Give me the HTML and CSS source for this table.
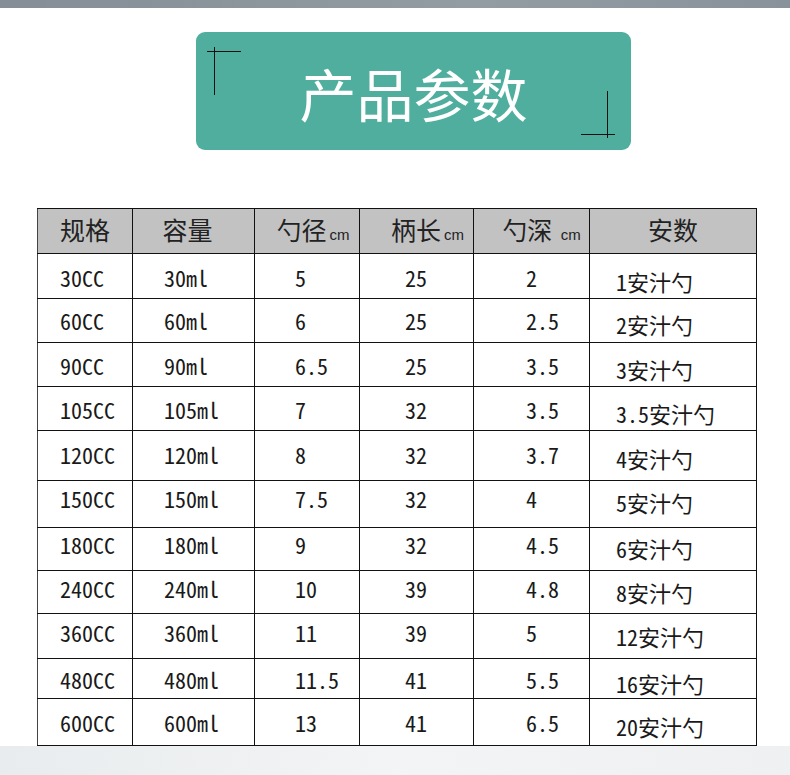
FILE: index.html
```html
<!DOCTYPE html>
<html lang="zh">
<head>
<meta charset="utf-8">
<title>产品参数</title>
<link rel="stylesheet" href="styles.css">
</head>
<body>
<div class="topbar"></div>
<section class="title-wrap">
  <div class="title-box">
    <span class="mark mark-tl-h"></span>
    <span class="mark mark-tl-v"></span>
    <span class="mark mark-br-v"></span>
    <span class="mark mark-br-h"></span>
    <h1 class="title">产品参数</h1>
  </div>
</section>
<table class="spec">
  <thead>
    <tr>
      <th>规格</th>
      <th>容量</th>
      <th>勺径<span class="unit">cm</span></th>
      <th>柄长<span class="unit">cm</span></th>
      <th>勺深 <span class="unit">cm</span></th>
      <th>安数</th>
    </tr>
  </thead>
  <tbody>
    <tr><td>30CC</td><td>30ml</td><td>5</td><td>25</td><td>2</td><td>1安汁勺</td></tr>
    <tr><td>60CC</td><td>60ml</td><td>6</td><td>25</td><td>2.5</td><td>2安汁勺</td></tr>
    <tr><td>90CC</td><td>90ml</td><td>6.5</td><td>25</td><td>3.5</td><td>3安汁勺</td></tr>
    <tr><td>105CC</td><td>105ml</td><td>7</td><td>32</td><td>3.5</td><td>3.5安汁勺</td></tr>
    <tr><td>120CC</td><td>120ml</td><td>8</td><td>32</td><td>3.7</td><td>4安汁勺</td></tr>
    <tr><td>150CC</td><td>150ml</td><td>7.5</td><td>32</td><td>4</td><td>5安汁勺</td></tr>
    <tr><td>180CC</td><td>180ml</td><td>9</td><td>32</td><td>4.5</td><td>6安汁勺</td></tr>
    <tr><td>240CC</td><td>240ml</td><td>10</td><td>39</td><td>4.8</td><td>8安汁勺</td></tr>
    <tr><td>360CC</td><td>360ml</td><td>11</td><td>39</td><td>5</td><td>12安汁勺</td></tr>
    <tr><td>480CC</td><td>480ml</td><td>11.5</td><td>41</td><td>5.5</td><td>16安汁勺</td></tr>
    <tr><td>600CC</td><td>600ml</td><td>13</td><td>41</td><td>6.5</td><td>20安汁勺</td></tr>
  </tbody>
</table>
<div class="footer"></div>
</body>
</html>
```
FILE: styles.css
```css
* { box-sizing: border-box; }
html, body { margin: 0; padding: 0; background: #ffffff; }
body {
  width: 790px;
  height: 775px;
  overflow: hidden;
  font-family: "Noto Sans CJK SC", sans-serif;
}
.topbar {
  height: 8px;
  background: linear-gradient(90deg, #838e96 0%, #8c979e 40%, #919ca3 60%, #87929a 100%);
}
.title-wrap {
  padding-top: 24px;
  padding-left: 196px;
}
.title-box {
  position: relative;
  width: 435px;
  height: 118px;
  background: #4fae9e;
  border-radius: 9px;
  display: flex;
  align-items: center;
  justify-content: center;
}
.title {
  margin: 0;
  color: #ffffff;
  font-family: "Noto Sans CJK SC", sans-serif;
  font-weight: 400;
  font-size: 57px;
  line-height: 1;
  letter-spacing: 0;
  transform: translateY(1px);
}
.mark { position: absolute; background: #111; }
.mark-tl-h { left: 11px; top: 19px; width: 34px; height: 1px; }
.mark-tl-v { left: 18px; top: 15px; width: 1px; height: 48px; }
.mark-br-v { left: 411px; top: 59px; width: 1px; height: 47px; }
.mark-br-h { left: 385px; top: 102px; width: 34px; height: 1px; }

.spec {
  margin-top: 58px;
  margin-left: 37px;
  border-collapse: collapse;
  table-layout: fixed;
  width: 719px;
}
.spec th, .spec td {
  border: 1px solid #111;
  padding: 0;
  white-space: nowrap;
}
.spec th:nth-child(1), .spec td:nth-child(1) { width: 95px; border-left-color: #444; }
.spec th:nth-child(2), .spec td:nth-child(2) { width: 122px; }
.spec th:nth-child(3), .spec td:nth-child(3) { width: 105px; }
.spec th:nth-child(4), .spec td:nth-child(4) { width: 114px; }
.spec th:nth-child(5), .spec td:nth-child(5) { width: 116px; }
.spec th:nth-child(6), .spec td:nth-child(6) { width: 167px; }

.spec thead tr { height: 45px; }
.spec th {
  background: #c2c2c2;
  color: #222;
  font-weight: 400;
  font-size: 25px;
  text-align: center;
  vertical-align: middle;
  font-family: "Noto Sans CJK SC", sans-serif;
  line-height: 1;
  padding-bottom: 3px;
}
.spec th:nth-child(2) { padding-right: 12px; }
.spec th:nth-child(3) { padding-left: 12px; }
.spec th:nth-child(4) { padding-left: 22px; }
.spec th:nth-child(5) { padding-left: 20px; }
.unit {
  font-family: "Liberation Sans", Arial, sans-serif;
  font-size: 15px;
  margin-left: 3px;
}
.spec td {
  font-family: "Noto Sans Mono CJK JP", "Noto Sans CJK JP", monospace;
  font-size: 22px;
  color: #1a1a1a;
  line-height: 22px;
  vertical-align: top;
  padding-top: var(--pt);
}
.spec td:nth-child(1) { padding-left: 22px; }
.spec td:nth-child(2) { padding-left: 31px; }
.spec td:nth-child(3) { padding-left: 40px; }
.spec td:nth-child(4) { padding-left: 45px; }
.spec td:nth-child(5) { padding-left: 52px; }
.spec td:nth-child(6) { padding-left: 26px; padding-top: calc(var(--pt) + 4px); }

.spec tbody tr:nth-child(1) { height: 45px; --pt: 12px; }
.spec tbody tr:nth-child(2) { height: 44px; --pt: 10px; }
.spec tbody tr:nth-child(3) { height: 44px; --pt: 11px; }
.spec tbody tr:nth-child(4) { height: 44px; --pt: 11px; }
.spec tbody tr:nth-child(5) { height: 50px; --pt: 12px; }
.spec tbody tr:nth-child(6) { height: 47px; --pt: 6px; }
.spec tbody tr:nth-child(7) { height: 43px; --pt: 5px; }
.spec tbody tr:nth-child(8) { height: 43px; --pt: 6px; }
.spec tbody tr:nth-child(9) { height: 45px; --pt: 7px; }
.spec tbody tr:nth-child(10) { height: 40px; --pt: 9px; }
.spec tbody tr:nth-child(11) { height: 47px; --pt: 12px; }

.footer {
  height: 30px;
  background: linear-gradient(90deg, #e9ecee 0%, #f2f4f5 50%, #eef0f1 100%);
}
```
